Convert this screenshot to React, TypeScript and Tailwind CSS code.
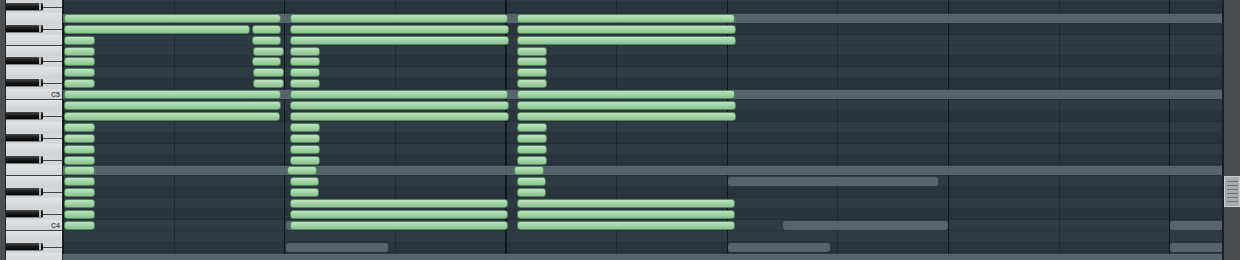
import React from 'react';
import clsx from 'clsx';

type Span = [number, number];

const GRID_X = 63;
const FIRST_K = -2;
const LAST_K = 22;
const BLACK = [1, 3, 6, 8, 10];

const pitchOf = (k: number) => 79 - k;
const isBlack = (k: number) => BLACK.includes(pitchOf(k) % 12);

const notes: Record<number, Span[]> = {};
const add = (k: number, a: number, b: number) => {
    (notes[k] ||= []).push([a, b]);
};

// P
add(0, 64, 281);
add(1, 64, 250);
add(1, 252, 281);
for (let k = 2; k <= 6; k++) {
    add(k, 64, 95);
    if (k === 2 || k === 4) add(k, 252, 281);
    else add(k, 253, 284);
}
add(7, 64, 281);
add(8, 64, 281);
add(9, 64, 280);
for (let k = 10; k <= 19; k++) add(k, 64, 95);

// the two E's
const letterE = (x0: number, x1: number, col: number) => {
    for (let k = 0; k <= 19; k++) {
        if (k <= 2 || (k >= 7 && k <= 9) || k >= 17) add(k, x0, x1 + (k === 1 || k === 2 || k === 8 || k === 9 ? 1 : 0));
        else if (k === 14) add(k, x0 - 3, col - 3);
        else if (k >= 15) add(k, x0, col - 1);
        else add(k, x0, col);
    }
};
letterE(290, 508, 320);
letterE(517, 735, 547);

// ghost notes from other channels
const fullGhost = [0, 7, 14, 22];
const ghosts: Record<number, Span[]> = {
    15: [[728, 938]],
    19: [[286, 400], [783, 948], [1170, 1240]],
    21: [[286, 388], [728, 830], [1170, 1240]],
};

const rows: number[] = [];
for (let k = FIRST_K; k <= LAST_K; k++) rows.push(k);

const PianoRow = ({ k }: { k: number }) => {
    const p = pitchOf(k);
    const pc = p % 12;
    const oct = Math.floor(p / 12) - 1;

    if (isBlack(k)) {
        return (
            <div className="flex h-[10.917px] bg-[#d3d7d9]">
                <div className="mt-[1px] flex h-[7px] w-[37px] justify-end rounded-r-[1px] bg-linear-to-b from-[#4a4a4a] via-[#1a1a1a] to-[#050505] shadow-[0_1px_0_#7c8082]">
                    <div className="mr-[2px] w-[2px] bg-[#b4b4b4]" />
                </div>
                <div className="flex flex-1 flex-col justify-center">
                    <div className="h-px bg-[#3f4447]" />
                </div>
            </div>
        );
    }

    return (
        <div
            className={clsx(
                'flex h-[10.917px] items-end justify-end bg-linear-to-b from-[#e0e3e4] to-[#cfd3d5] pr-[2px]',
                (pc === 0 || pc === 5) && 'border-b border-[#3b4043]'
            )}
        >
            {pc === 0 && (
                <span className="pb-[1px] font-['Liberation_Sans',sans-serif] text-[7px] leading-none font-bold text-[#4b5255]">
                    C{oct}
                </span>
            )}
        </div>
    );
};

const GridRow = ({ k }: { k: number }) => (
    <div className={clsx('relative h-[10.917px] border-b border-black/10', isBlack(k) && 'bg-black/[0.09]')}>
        {fullGhost.includes(k) && <div className="absolute inset-x-0 top-[1px] h-[9px] bg-[#5a6a72]/90" />}
        {(ghosts[k] || []).map(([a, b], i) => (
            <div
                key={'g' + i}
                className="absolute top-[1px] h-[9px] rounded-[3px] bg-[#55656d]"
                style={{ left: a - GRID_X, width: b - a }}
            />
        ))}
        {(notes[k] || []).map(([a, b], i) => (
            <div
                key={'n' + i}
                className="absolute top-[1px] h-[9px] rounded-[3px] border border-[#56845d] bg-linear-to-b from-[#bce4bf] via-[#a1d4a5] to-[#8dc292]"
                style={{ left: a - GRID_X, width: b - a }}
            />
        ))}
    </div>
);

const App: React.FC = () => {
    return (
        <div className="flex h-[260px] w-[1240px] overflow-hidden bg-[#2d3b43]">
            <div className="w-[6px] border-r border-[#24282a] bg-[#4b4f52]" />

            <div className="w-[57px] border-r border-[#22272a]">
                <div className="mt-[-9.03px]">
                    {rows.map(k => (
                        <PianoRow key={k} k={k} />
                    ))}
                </div>
            </div>

            <div className="flex-1 overflow-hidden bg-[#2d3b43] bg-[image:repeating-linear-gradient(90deg,#121a1f_0px,#121a1f_1px,transparent_1px,transparent_110.6px,#222d33_110.6px,#222d33_111.6px,transparent_111.6px,transparent_221.25px)]">
                <div className="mt-[-9.03px]">
                    {rows.map(k => (
                        <GridRow key={k} k={k} />
                    ))}
                </div>
            </div>

            <div className="w-[18px] border-l-2 border-[#1b1f21] bg-[#4b4f52]">
                <div className="mt-[176px] flex h-[31px] flex-col items-center justify-center gap-[3px] border border-[#c9cdcf] bg-[#a7acaf]">
                    {[0, 1, 2, 3, 4, 5].map(i => (
                        <div key={i} className="h-px w-[11px] bg-[#6c7174]" />
                    ))}
                </div>
            </div>
        </div>
    );
};

export default App;
